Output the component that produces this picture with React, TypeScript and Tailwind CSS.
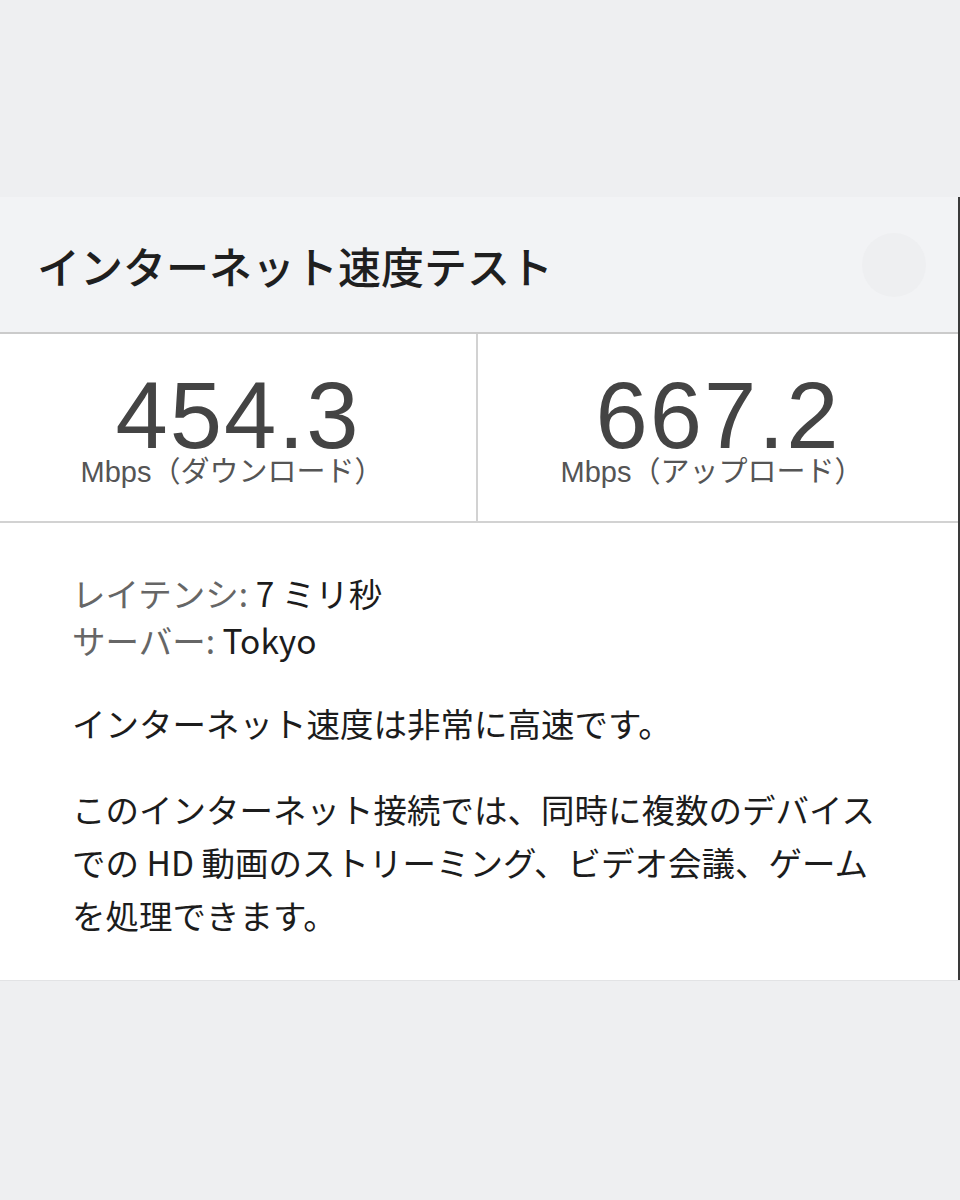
import React from "react";

const jp = { fontFamily: '"Noto Sans CJK JP", "Noto Sans", sans-serif' } as const;
const num = { fontFamily: '"Liberation Sans", Arial, sans-serif' } as const;

export default function App() {
  return (
    <div className="w-[960px] h-[1200px] bg-[#eeeff1] flex flex-col" style={jp}>
      <div className="h-[197px] shrink-0" />
      <div className="w-full border-r-2 border-[#3a3a3a] bg-white flex flex-col">
        <div className="h-[137px] bg-[#f2f3f5] flex items-center justify-between pl-[37px] pr-[32px] border-b-2 border-[#cbcbcb]">
          <div className="text-[43px] leading-none text-[#1f1f1f] font-medium mt-[2px]">インターネット速度テスト</div>
          <div className="w-[64px] h-[64px] rounded-full bg-[#eeeff1]" />
        </div>
        <div className="h-[189px] flex border-b-2 border-[#d2d2d2]">
          <div className="w-[478px] flex flex-col items-center pt-[44px] border-r-2 border-[#d2d2d2]">
            <div className="text-[94px] leading-[76px] text-[#444] tracking-[2px]" style={num}>454.3</div>
            <div className="text-[29px] leading-[30px] text-[#555] pr-[12px]">
              <span style={num}>Mbps</span>（ダウンロード）
            </div>
          </div>
          <div className="flex-1 flex flex-col items-center pt-[44px]">
            <div className="text-[94px] leading-[76px] text-[#444] tracking-[2px]" style={num}>667.2</div>
            <div className="text-[29px] leading-[30px] text-[#555] pr-[12px]">
              <span style={num}>Mbps</span>（アップロード）
            </div>
          </div>
        </div>
        <div className="pl-[72px] pt-[46px] pb-[39px] text-[33.5px] text-[#1c1c1c]">
          <div className="leading-[47px]">
            <span className="text-[#666]">レイテンシ:</span> 7 ミリ秒
          </div>
          <div className="leading-[47px]">
            <span className="text-[#666]">サーバー:</span> Tokyo
          </div>
          <div className="leading-[47px] mt-[36px]">インターネット速度は非常に高速です。</div>
          <div className="leading-[53px] mt-[36px] whitespace-nowrap">
            このインターネット接続では、同時に複数のデバイス
            <br />
            での HD 動画のストリーミング、ビデオ会議、ゲーム
            <br />
            を処理できます。
          </div>
        </div>
      </div>
      <div className="border-t border-[#e2e3e5] flex-1" />
    </div>
  );
}
